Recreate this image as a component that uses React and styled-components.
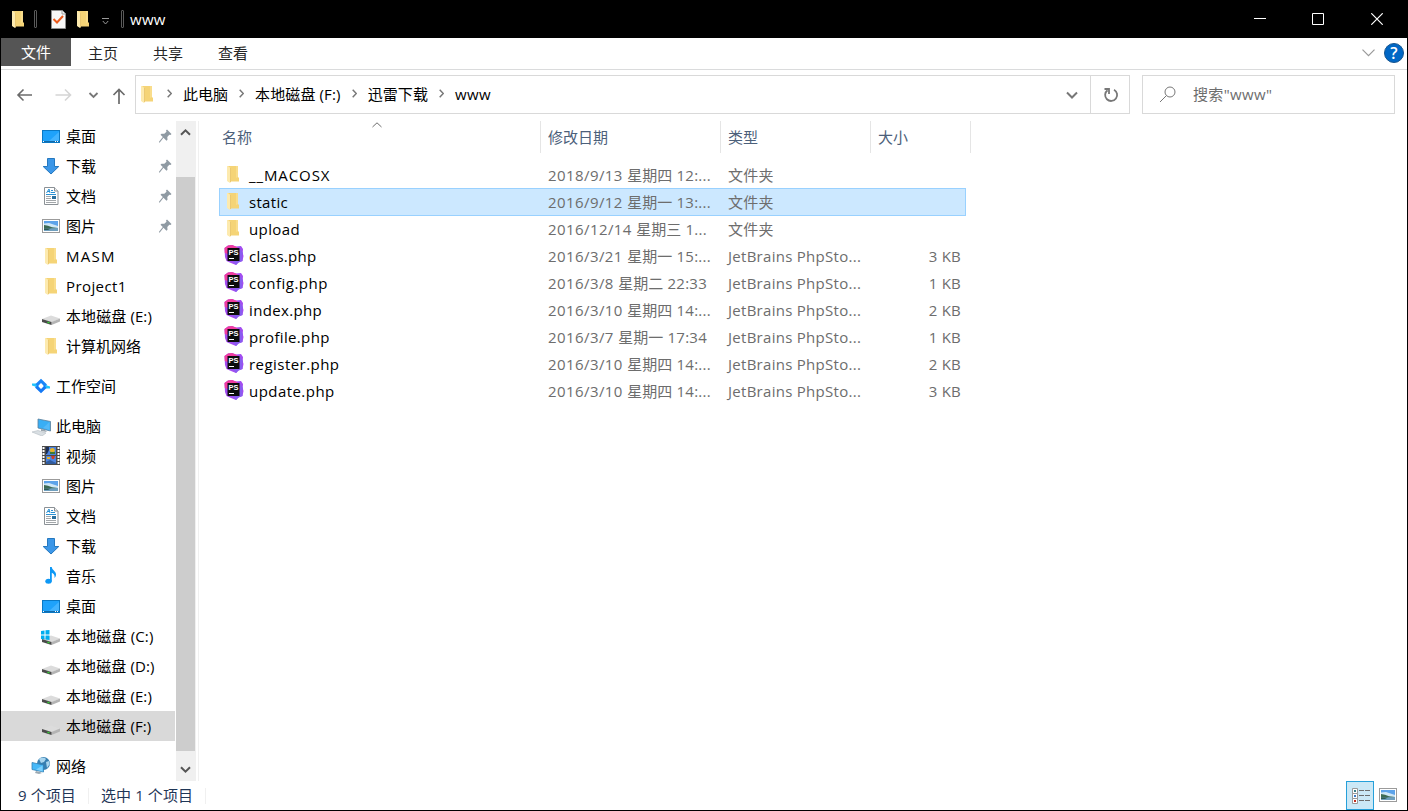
import React from 'react';
import styled, { createGlobalStyle } from 'styled-components';


const GlobalStyle = createGlobalStyle`
  * {
    box-sizing: border-box;
  }

  body {
    margin: 0;
    overflow: hidden;
    font-family: 'Open Sans', 'Noto Sans CJK SC', sans-serif;
    font-size: 15px;
    line-height: 20px;
    color: #000;
    background: #fff;
  }

  svg {
    display: block;
    flex: none;
  }
`;

const Window = styled.div`
  width: 1408px;
  height: 811px;
  display: flex;
  flex-direction: column;
  border: 1px solid #000;
  border-top: none;
  background: #fff;
`;

const Label = styled.span`
  white-space: pre;
  letter-spacing: ${props => props.$spacing || 0}px;
`;

/* title bar */

const TitleBar = styled.header`
  height: 38px;
  flex: none;
  display: flex;
  align-items: center;
  padding-left: 7px;
  color: #fff;
  background: #000;
`;

const TitleDivider = styled.span`
  width: 3px;
  height: 18px;
  margin: 0 ${props => props.$right}px 0 ${props => props.$left}px;
  border: 1px solid #5a5a5a;
  border-radius: 1px;
`;

const QuickIcon = styled.span`
  margin-right: ${props => props.$gap}px;
`;

const WindowButtons = styled.div`
  display: flex;
  margin-left: auto;
`;

const WindowButton = styled.span`
  width: ${props => props.$width || 58}px;
  height: 38px;
  display: flex;
  align-items: center;
  justify-content: center;
`;

/* ribbon */

const Ribbon = styled.nav`
  height: 32px;
  flex: none;
  display: flex;
  align-items: flex-start;
  border-bottom: 1px solid #dadbdc;
`;

const FileTab = styled.span`
  width: 70px;
  height: 28px;
  padding: 4px 0 0 20px;
  color: #fff;
  background: #555;
`;

const Tab = styled.span`
  width: 65px;
  padding: 5px 0 0 17px;
  color: #262626;
`;

const RibbonTools = styled.div`
  margin-left: auto;
  padding: 5px 3px 0 0;
  display: flex;
  align-items: center;
  gap: 9px;
`;

const HelpBadge = styled.span`
  width: 20px;
  height: 20px;
  border-radius: 50%;
  border: 1px solid #17558f;
  background: #0067c5;
  color: #fff;
  font-size: 16px;
  font-weight: 600;
  line-height: 18px;
  text-align: center;
`;

/* address bar */

const NavBar = styled.div`
  height: 51px;
  flex: none;
  display: flex;
  padding: 5px 12px 0 14px;
`;

const NavArrows = styled.div`
  width: 120px;
  height: 39px;
  display: flex;
  align-items: center;
`;

const AddressBox = styled.div`
  width: 995px;
  height: 39px;
  padding-left: 1px;
  display: flex;
  align-items: center;
  border: 1px solid #d9d9d9;

  > svg {
    margin: -1px -1px 0 0;
  }
`;

const Crumb = styled.span`
  display: flex;
  align-items: center;
  margin-top: -2px;

  svg {
    margin: 0 11px;
  }
`;

const AddressEnd = styled.span`
  width: ${props => props.$divided ? 39 : 36}px;
  height: 37px;
  padding-left: ${props => props.$divided ? 2 : 0}px;
  display: flex;
  align-items: center;
  justify-content: center;
  border-left: ${props => props.$divided ? '1px solid #d9d9d9' : 'none'};
  margin-left: ${props => props.$divided ? 0 : 'auto'};
`;

const SearchBox = styled.div`
  width: 253px;
  height: 39px;
  margin-left: 12px;
  padding: 0 0 2px 16px;
  display: flex;
  align-items: center;
  gap: 17px;
  border: 1px solid #d9d9d9;
  color: #6d6d6d;

  svg {
    margin-top: 2px;
  }
`;

/* side tree */

const Body = styled.div`
  height: 660px;
  flex: none;
  display: flex;
`;

const Tree = styled.aside`
  width: 174px;
`;

const TreeRow = styled.div`
  height: 30px;
  margin-top: ${props => props.$apart ? 10 : 0}px;
  padding: 0 3px 0 ${props => props.$level === 1 ? 30 : 40}px;
  display: flex;
  align-items: center;
  gap: 5px;
  background: ${props => props.$selected ? '#d9d9d9' : 'transparent'};
`;

const PinSlot = styled.span`
  margin-left: auto;
`;

const Scrollbar = styled.div`
  width: 20px;
  margin-left: 1px;
  display: flex;
  flex-direction: column;
  justify-content: space-between;
  background: #f0f0f0;
`;

const ScrollEnd = styled.span`
  height: ${props => props.$height}px;
  padding: ${props => props.$top}px 0 0 4px;
`;

const Thumb = styled.span`
  width: 19px;
  height: 574px;
  background: #cdcdcd;
`;

/* file list */

const Files = styled.main`
  width: 1209px;
  margin-left: 2px;
  border-left: 1px solid #f0f0f0;
  padding-left: 15px;
`;

const HeaderRow = styled.div`
  height: 40px;
  display: flex;
`;

const HeaderCell = styled.div`
  width: ${props => props.$width}px;
  height: 32px;
  position: relative;
  padding: 6px 0 0 ${props => props.$first ? 8 : 7}px;
  border-right: 1px solid #e5e5e5;
  color: #4c607a;
`;

const SortMark = styled.span`
  position: absolute;
  top: 1px;
  left: 158px;
`;

const FileRow = styled.div`
  width: 747px;
  height: 28px;
  margin: 0 0 -1px 5px;
  padding: 0 4px 0 3px;
  display: flex;
  align-items: center;
  border: 1px solid ${props => props.$selected ? '#99d1ff' : 'transparent'};
  background: ${props => props.$selected ? '#cce8ff' : 'transparent'};
`;

const NameCell = styled.span`
  width: 325px;
  padding-left: ${props => props.$folder ? 0 : 1}px;
  display: flex;
  align-items: center;
  gap: ${props => props.$folder ? 6 : 5}px;

  svg {
    margin-top: -3px;
  }
`;

const DetailCell = styled.span`
  width: ${props => props.$width}px;
  text-align: ${props => props.$right ? 'right' : 'left'};
  white-space: nowrap;
  color: #6d6d6d;
`;

/* status bar */

const StatusBar = styled.footer`
  height: 29px;
  flex: none;
  display: flex;
  align-items: center;
  padding: 0 9px 0 17px;
  color: #1f3657;
`;

const StatusText = styled(Label)`
  margin-top: -2px;
`;

const StatusDivider = styled.span`
  width: 1px;
  height: 16px;
  margin: 0 12px;
  background: #f0f0f0;
`;

const ViewButtons = styled.div`
  margin-left: auto;
  display: flex;
  align-items: center;
  gap: 4px;

  > svg {
    margin-top: -1px;
  }
`;

const ViewButton = styled.span`
  width: 28px;
  height: 29px;
  padding: 6px 0 0 5px;
  border: 1px solid #26a0da;
  background: #cbe8f6;
`;


const Folder = () => (
  <svg width="20" height="20" viewBox="0 0 20 20">
    <path d="M5 2h10v11l1 1v3.500H5z" fill="#f5d477" />
    <path d="M13 2h2v11l-2 1z" fill="#f9dd8c" />
    <path d="M4 2h1l3 2.500v13.500l-1 1-3-2z" fill="#fdeaae" />
    <path d="M7.500 4v14" stroke="#e6c063" strokeWidth=".8" />
  </svg>
);

const PhpFile = () => (
  <svg width="20" height="20" viewBox="0 0 20 20">
    <path d="M.5 3L4 .5 8 0l4 1.500L17 1l2 3-.3 4 .8 3-1 5-4 1.500-2.500 2.500-5-2L2.500 16 1 12z" fill="#a34df0" />
    <path d="M.5 3L4 .5 8 0l5 2L14 4 5 5 4 9 .8 8z" fill="#f03ca0" />
    <path d="M16 4l3 4-1 3 .5 5-4 1.500-2.500 2.500-3-4z" fill="#8a5cf0" />
    <rect x="3.500" y="3" width="12" height="13" fill="#0b0b0b" />
    <text x="4.400" y="9.800" fontSize="7" fontWeight="700" fill="#fff" textLength="10" lengthAdjust="spacingAndGlyphs" fontFamily="Liberation Sans, sans-serif">PS</text>
    <path d="M5 13.500h5" stroke="#fff" strokeWidth="1" />
  </svg>
);

const Desktop = () => (
  <svg width="20" height="20" viewBox="0 0 20 20">
    <rect x="1.500" y="4.500" width="17" height="12" fill="#1ea2fb" stroke="#0a78c4" />
    <path d="M18 6v9H8z" fill="#42b3ff" />
    <path d="M2 15.500h16" stroke="#1269a8" />
    <path d="M2 15.500h1M14 15.500h1M16 15.500h1" stroke="#fff" />
  </svg>
);

const Download = () => (
  <svg width="20" height="20" viewBox="0 0 20 20">
    <path d="M6.500 2.500h7v8h4.300L10 18l-7.800-7.500h4.300z" fill="#3c97e8" stroke="#2578bf" />
  </svg>
);

const Document = () => (
  <svg width="20" height="20" viewBox="0 0 20 20">
    <path d="M3.500 1.500h10l3.500 3.500v13.500H3.500z" fill="#fff" stroke="#8b9196" />
    <path d="M13.500 1.500v3.500h3.500" fill="#eee" stroke="#8b9196" />
    <path d="M5.500 7l2.500-4 1 4M6.500 5.500h2.500M10 4.500h2M10 6.500h4M5 8.500h10" fill="none" stroke="#2a91d4" />
    <path d="M5 10.500h5M5 12.500h5M5 14.500h10M5 16.500h10" stroke="#a3a7aa" />
    <rect x="11" y="10" width="4" height="3" fill="#2b6f9d" />
  </svg>
);

const Picture = () => (
  <svg width="20" height="20" viewBox="0 0 20 20">
    <rect x="1.500" y="3.500" width="17" height="13" fill="#fff" stroke="#9b9b9b" />
    <rect x="3" y="5" width="14" height="10" fill="#5da3ea" />
    <path d="M3 7.500l5-.5 9 3v2H3z" fill="#cfe7f7" />
    <path d="M3 9l4 .8 4 1.400 6 .8v1H3z" fill="#3e6b54" />
    <path d="M3 12.500l14-.5v3H3z" fill="#6f9fbe" />
    <path d="M3 12.500h7l-3 1.500H3z" fill="#2f5c55" />
  </svg>
);

const Disk = ({ windows }) => (
  <svg width="20" height="20" viewBox="0 0 20 20">
    <path d="M1 13l9-3.500 9 3-8.500 3.800z" fill="#dcdcdc" />
    <path d="M10.500 16l8.500-3.500v3L10.500 19z" fill="#b4b4b4" />
    <path d="M1 13l9.500 3v3L1 16z" fill="#4a4a4a" />
    <path d="M6.500 16.300l2 .6" stroke="#36d236" strokeWidth="1.500" />
    {windows && <path d="M0 5l3.500-.5v4H0zM4.500 4.300L8.500 4v4.500h-4zM0 9.500h3.500v4L0 13zM4.500 9.500h4V14l-4-.4z" fill="#00adef" />}
  </svg>
);

const Workspace = () => (
  <svg width="20" height="20" viewBox="0 0 20 20">
    <path d="M1 7.500h4L8 10l-2 2-2-1.500L1 9.500z" fill="#22c4fb" />
    <path d="M19 12.500h-4L12 10l2-2 2 1.500 3 1z" fill="#22c4fb" />
    <path d="M4.500 8L10 2.700 16 8.500l-2.500 2L10 7l-3.500 3.500z" fill="#1a85f8" />
    <path d="M15.500 12L10 17.300 4 11.500l2.500-2L10 13l3.500-3.500z" fill="#1479f5" />
  </svg>
);

const Computer = () => (
  <svg width="20" height="20" viewBox="0 0 20 20">
    <path d="M7 3l12.500 2.500V15L7 12z" fill="#39aef5" stroke="#5c7f9b" strokeWidth=".8" />
    <path d="M18.500 6v8L12 12z" fill="#55b9f8" />
    <path d="M10 13l4 1 2 2-6-1z" fill="#9aa4ac" />
    <path d="M1 16l6-1.500 8 2.500-4 3z" fill="#d9dfe3" stroke="#b4bcc2" strokeWidth=".6" />
  </svg>
);

const Video = () => (
  <svg width="20" height="20" viewBox="0 0 20 20">
    <rect x="1" y="0" width="18" height="19" fill="#4a4a4a" />
    <path d="M2.500 1v18M17.500 1v18" stroke="#fff" strokeWidth="2" strokeDasharray="2 1" />
    <rect x="5" y="1" width="10" height="8" fill="#4b83df" />
    <rect x="5" y="10" width="10" height="8" fill="#4b83df" />
    <path d="M5 1h3v3l-2 4H5z" fill="#1d2f55" />
    <path d="M8.500 5c0-2 1.500-3 3-3s2.500 1.500 2.500 3l-2.500 2z" fill="#e5b32a" />
    <path d="M9 6h5v2H9z" fill="#3d7b35" />
    <path d="M10 10h4l-1 3h-2z" fill="#cf3b25" />
    <path d="M6 11h3v2H6z" fill="#e5b32a" />
    <path d="M5 16l4-2 6 3v1H5z" fill="#315b9d" />
  </svg>
);

const Music = () => (
  <svg width="20" height="20" viewBox="0 0 20 20">
    <ellipse cx="7.500" cy="15.300" rx="3.200" ry="2.500" fill="#0e98f5" />
    <path d="M9 1h1.800c0 3 4.200 4 4.200 7.500 0 1.500-.6 2.700-1.500 3.500.6-3-1-4.500-2.700-5.200V15.500H9z" fill="#0e98f5" />
  </svg>
);

const Network = () => (
  <svg width="20" height="20" viewBox="0 0 20 20">
    <circle cx="12.500" cy="7.500" r="6.500" fill="#377fb1" />
    <path d="M8 3c3-2 6-1 7 0l-2 3-3 1zM15 6l3-1 .8 3-2.800 4z" fill="#a9d5ee" />
    <path d="M1 6.500l11.500 2.500v7L1 13.500z" fill="#45b8f8" stroke="#3480b5" strokeWidth=".8" />
    <path d="M11.500 9.500v6L5 13.500z" fill="#7dd0fc" />
    <path d="M5 15l4 1 2 1-3 1-4-1z" fill="#9aa8b2" />
  </svg>
);

const Pin = () => (
  <svg width="13" height="14" viewBox="0 0 13 14">
    <path d="M8 .5L12.500 5l-1 1-1.200-.2-2 2.200.2 2.800-1 1-3-3L.8 13.500H0v-.8L3.800 8 1.500 5.700l1-1 2.800.1L7.500 2.700 7 1.500z" fill="#8f9aa3" />
  </svg>
);

const TaskFile = () => (
  <svg width="15" height="19" viewBox="0 0 15 19">
    <path d="M.5.500h11l3 3v15H.5z" fill="#f7f7f7" stroke="#8d8d8d" />
    <path d="M11 1v3h3" fill="none" stroke="#9d9d9d" />
    <path d="M2.500 9l3.500 3.500L12 6" fill="none" stroke="#ec5a1c" strokeWidth="2" />
  </svg>
);

const Details = () => (
  <svg width="18" height="16" viewBox="0 0 18 16">
    <path d="M.5.500h5v5h-5zM.5 5.500h5v5h-5zM.5 10.500h5v5h-5z" fill="#fff" stroke="#999" />
    <rect x="2" y="2" width="2" height="2" fill="#3b7f87" />
    <rect x="2" y="7" width="2" height="2" fill="#3a7cc4" />
    <rect x="2" y="12" width="2" height="2" fill="#c22e1e" />
    <path d="M7 2.500h5M13 2.500h5M7 7.500h5M13 7.500h5M7 12.500h5M13 12.500h5" stroke="#6d6d6d" />
  </svg>
);

const Stroke = ({ w, h, d, color = '#6e6e6e', width = 1.6 }) => (
  <svg width={w} height={h} viewBox={`0 0 ${w} ${h}`}>
    <path d={d} fill="none" stroke={color} strokeWidth={width} />
  </svg>
);

const CrumbArrow = () => <Stroke w={5} h={9} d="M.7 .7l3.600 3.800-3.600 3.800" color="#777" width={1.5} />;


const tree = [
  { icon: Desktop, name: '桌面', pinned: true },
  { icon: Download, name: '下载', pinned: true },
  { icon: Document, name: '文档', pinned: true },
  { icon: Picture, name: '图片', pinned: true },
  { icon: Folder, name: 'MASM', spacing: 1.3 },
  { icon: Folder, name: 'Project1', spacing: 0.4 },
  { icon: Disk, name: '本地磁盘 (E:)', spacing: 0.1 },
  { icon: Folder, name: '计算机网络' },
  { icon: Workspace, name: '工作空间', level: 1, apart: true },
  { icon: Computer, name: '此电脑', level: 1, apart: true },
  { icon: Video, name: '视频' },
  { icon: Picture, name: '图片' },
  { icon: Document, name: '文档' },
  { icon: Download, name: '下载' },
  { icon: Music, name: '音乐' },
  { icon: Desktop, name: '桌面' },
  { icon: Disk, name: '本地磁盘 (C:)', windows: true, spacing: 0.15 },
  { icon: Disk, name: '本地磁盘 (D:)', spacing: 0.1 },
  { icon: Disk, name: '本地磁盘 (E:)', spacing: 0.1 },
  { icon: Disk, name: '本地磁盘 (F:)', selected: true, spacing: 0.1 },
  { icon: Network, name: '网络', level: 1, apart: true },
];

const crumbs = [
  { name: '此电脑' },
  { name: '本地磁盘 (F:)', spacing: 0.13 },
  { name: '迅雷下载', spacing: 0.1 },
  { name: 'www', spacing: 0.3 },
];

const columns = [
  { name: '名称', width: 327, sorted: true },
  { name: '修改日期', width: 180 },
  { name: '类型', width: 150 },
  { name: '大小', width: 100 },
];

const files = [
  { name: '__MACOSX', date: '2018/9/13', day: '星期四', time: '12:...', spacing: 0.9 },
  { name: 'static', date: '2016/9/12', day: '星期一', time: '13:...', selected: true, spacing: 0.3 },
  { name: 'upload', date: '2016/12/14', day: '星期三', time: '1...', spacing: 0.4 },
  { name: 'class.php', date: '2016/3/21', day: '星期一', time: '15:...', size: '3 KB', spacing: 0.25 },
  { name: 'config.php', date: '2016/3/8', day: '星期二', time: '22:33', size: '1 KB', spacing: 0.5 },
  { name: 'index.php', date: '2016/3/10', day: '星期四', time: '14:...', size: '2 KB', spacing: 0.35 },
  { name: 'profile.php', date: '2016/3/7', day: '星期一', time: '17:34', size: '1 KB', spacing: 0.35 },
  { name: 'register.php', date: '2016/3/10', day: '星期四', time: '14:...', size: '2 KB', spacing: 0.45 },
  { name: 'update.php', date: '2016/3/10', day: '星期四', time: '14:...', size: '3 KB', spacing: 0.45 },
];


class App extends React.Component {

  renderTreeRow(item, i) {
    const Icon = item.icon;
    return (
      <TreeRow key={i} $level={item.level} $apart={item.apart} $selected={item.selected}>
        <Icon windows={item.windows}/>
        <Label $spacing={item.spacing}>{item.name}</Label>
        {item.pinned && <PinSlot><Pin/></PinSlot>}
      </TreeRow>
    );
  }

  renderFile(file) {
    return (
      <FileRow key={file.name} $selected={file.selected}>
        <NameCell $folder={!file.size}>
          {file.size ? <PhpFile/> : <Folder/>}
          <Label $spacing={file.spacing}>{file.name}</Label>
        </NameCell>
        <DetailCell $width={180}>
          <Label $spacing={0.42}>{file.date} </Label>
          <Label>{file.day}</Label>
          <Label $spacing={0.3}> {file.time}</Label>
        </DetailCell>
        <DetailCell $width={150}>
          {file.size ? <Label $spacing={0.28}>JetBrains PhpSto...</Label> : <Label $spacing={0.2}>文件夹</Label>}
        </DetailCell>
        <DetailCell $width={83} $right><Label $spacing={0.2}>{file.size}</Label></DetailCell>
      </FileRow>
    );
  }

  render() {
    return (
      <Window>
        <GlobalStyle/>
        <TitleBar>
          <QuickIcon $gap={0}><Folder/></QuickIcon>
          <TitleDivider $left={6} $right={14}/>
          <QuickIcon $gap={7}><TaskFile/></QuickIcon>
          <QuickIcon $gap={9}><Folder/></QuickIcon>
          <Stroke w={7} h={11} d="M0 4.500h7M.8 7l2.700 3L6.200 7" color="#999" width={1}/>
          <TitleDivider $left={12} $right={6}/>
          <Label $spacing={0.3}>www</Label>
          <WindowButtons>
            <WindowButton><Stroke w={12} h={12} d="M0 5.500h12" color="#fff" width={1}/></WindowButton>
            <WindowButton><Stroke w={12} h={12} d="M.5.500h11v11H.5z" color="#fff" width={1}/></WindowButton>
            <WindowButton $width={60}><Stroke w={12} h={12} d="M.3.300l11.400 11.400M11.700.300L.3 11.700" color="#fff" width={1.2}/></WindowButton>
          </WindowButtons>
        </TitleBar>

        <Ribbon>
          <FileTab>文件</FileTab>
          <Tab>主页</Tab>
          <Tab>共享</Tab>
          <Tab>查看</Tab>
          <RibbonTools>
            <Stroke w={13} h={8} d="M.5 .7l6 6 6-6" color="#999" width={1.2}/>
            <HelpBadge>?</HelpBadge>
          </RibbonTools>
        </Ribbon>

        <NavBar>
          <NavArrows>
            <Stroke w={36} h={20} d="M17 10H3M8.500 4.500L3 10l5.500 5.500" color="#6b6b6b"/>
            <Stroke w={32} h={20} d="M4.500 10h14.500M14 4.500l5.500 5.500-5.500 5.500" color="#d5d5d5"/>
            <Stroke w={28} h={20} d="M6.500 8l4 4 4-4" color="#777" width={1.8}/>
            <Stroke w={16} h={20} d="M8 19V4.500M2.500 10L8 4.500 13.500 10" color="#6b6b6b" width={1.7}/>
          </NavArrows>
          <AddressBox>
            <Folder/>
            {crumbs.map(crumb => (
              <Crumb key={crumb.name}>
                <CrumbArrow/>
                <Label $spacing={crumb.spacing}>{crumb.name}</Label>
              </Crumb>
            ))}
            <AddressEnd><Stroke w={12} h={8} d="M1 1.500l5 5 5-5" color="#777" width={2}/></AddressEnd>
            <AddressEnd $divided>
              <Stroke w={16} h={16} d="M11 2.700A6 6 0 1 1 4.500 3.200M1.500 2h4.500v5" color="#777" width={1.8}/>
            </AddressEnd>
          </AddressBox>
          <SearchBox>
            <Stroke w={17} h={17} d="M16 6a5 5 0 1 1-10 0a5 5 0 1 1 10 0M7.500 9.500L1 16" color="#777" width={1}/>
            <Label $spacing={0.35}>搜索"www"</Label>
          </SearchBox>
        </NavBar>

        <Body>
          <Tree>{tree.map(this.renderTreeRow)}</Tree>
          <Scrollbar>
            <ScrollEnd $height={56} $top={7}><Stroke w={11} h={8} d="M1 6.800l4.500-4.500L10 6.800" color="#555" width={2}/></ScrollEnd>
            <Thumb/>
            <ScrollEnd $height={30} $top={15}><Stroke w={11} h={8} d="M1 1.200l4.500 4.500L10 1.200" color="#555" width={2}/></ScrollEnd>
          </Scrollbar>
          <Files>
            <HeaderRow>
              {columns.map(column => (
                <HeaderCell key={column.name} $width={column.width} $first={column.sorted}>
                  {column.sorted && <SortMark><Stroke w={10} h={6} d="M.5 5L5 .8 9.500 5" width={1}/></SortMark>}
                  {column.name}
                </HeaderCell>
              ))}
            </HeaderRow>
            {files.map(this.renderFile)}
          </Files>
        </Body>

        <StatusBar>
          <StatusText $spacing={0.1}>9 个项目</StatusText>
          <StatusDivider/>
          <StatusText $spacing={0.1}>选中 1 个项目</StatusText>
          <StatusDivider/>
          <ViewButtons>
            <ViewButton><Details/></ViewButton>
            <Picture/>
          </ViewButtons>
        </StatusBar>
      </Window>
    );
  }
}

export default App;
